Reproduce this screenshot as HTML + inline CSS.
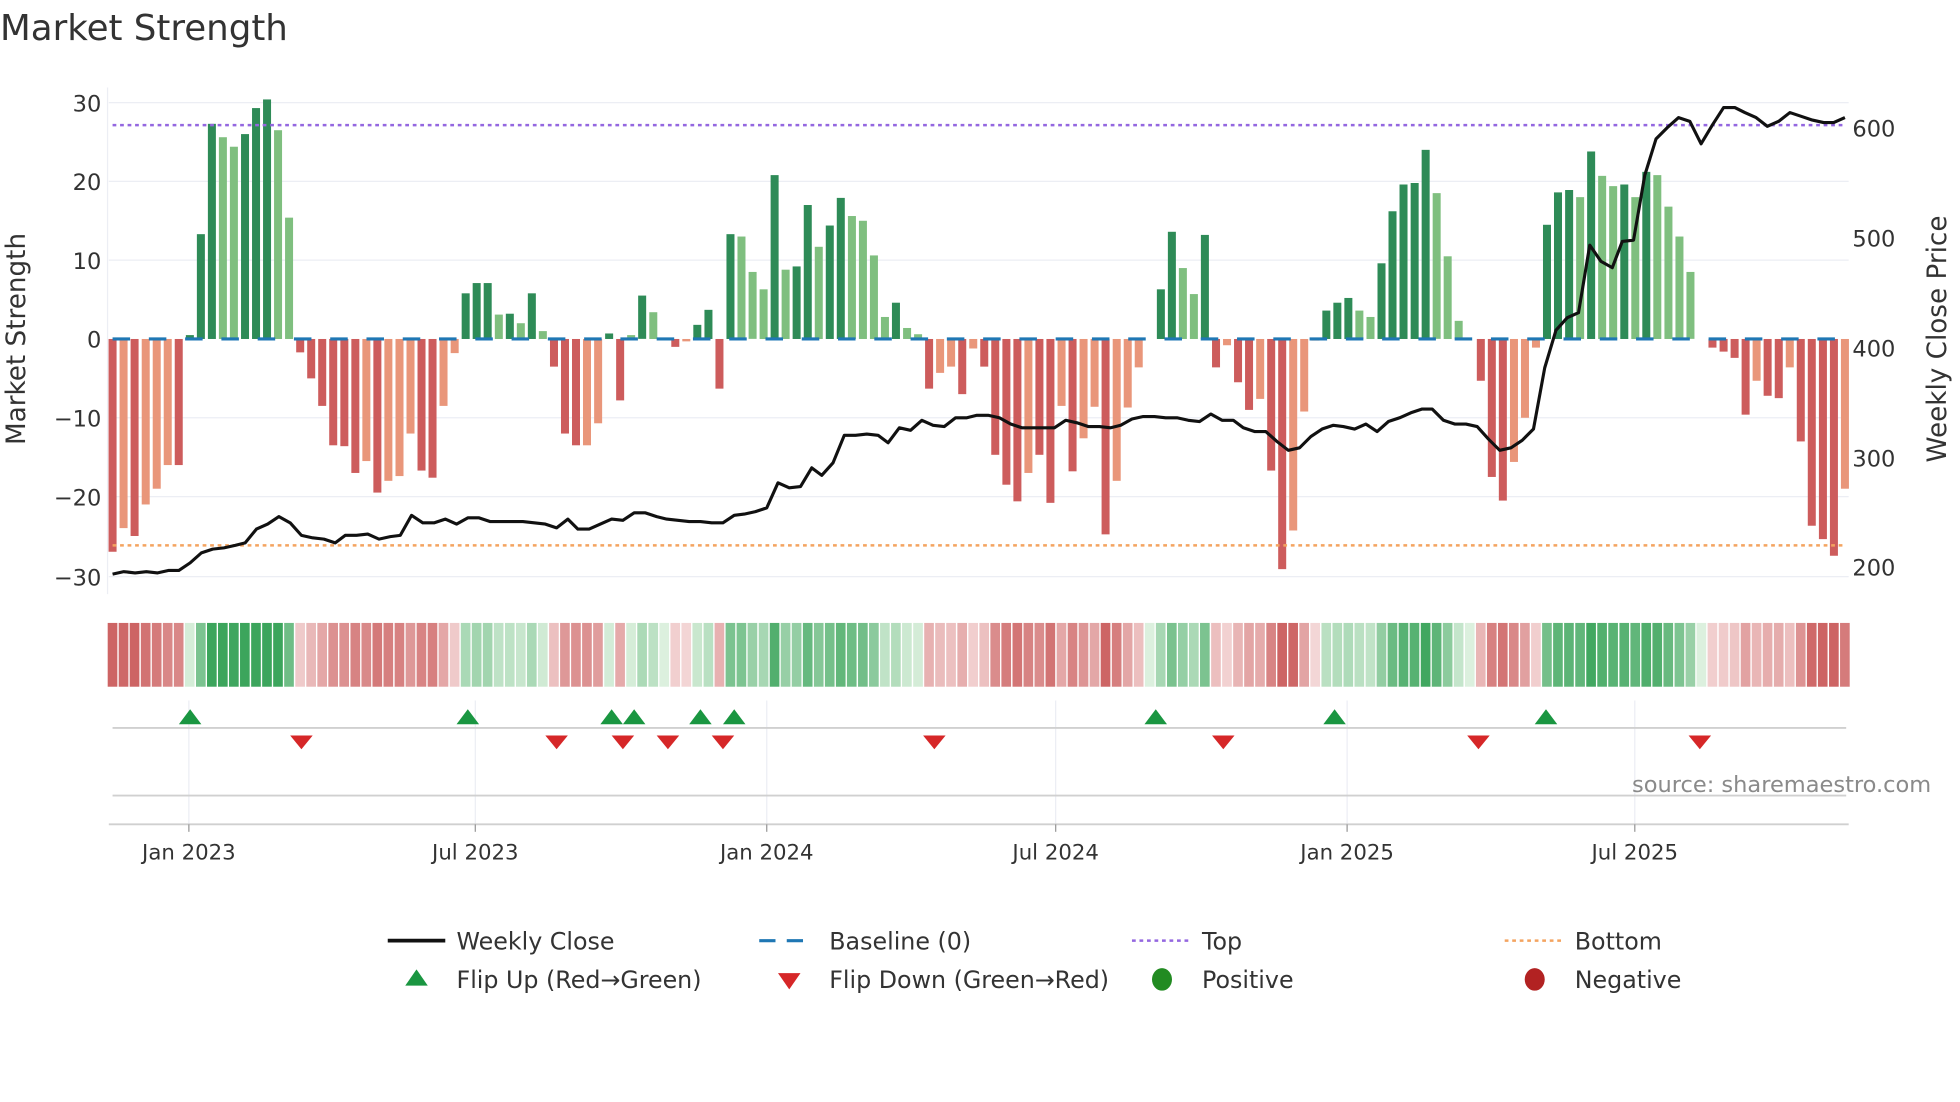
<!DOCTYPE html>
<html><head><meta charset="utf-8"><style>
html,body{margin:0;padding:0;background:#fff;width:1960px;height:1102px;overflow:hidden}
svg{display:block}
text{font-family:"DejaVu Sans","Liberation Sans",sans-serif;fill:#333}
</style></head><body>
<svg id="s" width="1960" height="1102" viewBox="0 0 1567 881" preserveAspectRatio="none" xmlns="http://www.w3.org/2000/svg">
<rect width="1567" height="881" fill="#fff"/>
<text x="0" y="32" font-size="28.5">Market Strength</text>
<g stroke="#eceef4" stroke-width="1">
<line x1="87" x2="1478" y1="82" y2="82"/><line x1="87" x2="1478" y1="145" y2="145"/>
<line x1="87" x2="1478" y1="208" y2="208"/><line x1="87" x2="1478" y1="334" y2="334"/>
<line x1="87" x2="1478" y1="397" y2="397"/><line x1="87" x2="1478" y1="461" y2="461"/>
<line x1="86" x2="86" y1="70" y2="475"/>
<line x1="151" x2="151" y1="560" y2="662"/><line x1="380" x2="380" y1="560" y2="662"/>
<line x1="613" x2="613" y1="560" y2="662"/><line x1="844" x2="844" y1="560" y2="662"/>
<line x1="1077" x2="1077" y1="560" y2="662"/><line x1="1307" x2="1307" y1="560" y2="662"/>
</g>
<g id="bars"></g>
<line x1="90" x2="1476" y1="271" y2="271" stroke="#1f77b4" stroke-width="2.5" stroke-dasharray="14,15"/>
<line x1="90" x2="1476" y1="100" y2="100" stroke="#9467e0" stroke-width="2" stroke-dasharray="3,3"/>
<line x1="90" x2="1476" y1="436" y2="436" stroke="#f4a460" stroke-width="2" stroke-dasharray="3,3"/>
<polyline id="close" fill="none" stroke="#111" stroke-width="2.5" stroke-linejoin="round"/>
<g font-size="18" text-anchor="end">
<text x="81" y="89">30</text><text x="81" y="152">20</text><text x="81" y="215">10</text>
<text x="81" y="278">0</text><text x="81" y="341">−10</text><text x="81" y="404">−20</text><text x="81" y="468">−30</text>
</g>
<g font-size="18">
<text x="1481" y="109">600</text><text x="1481" y="197">500</text><text x="1481" y="285">400</text>
<text x="1481" y="373">300</text><text x="1481" y="460">200</text>
</g>
<text font-size="21" text-anchor="middle" transform="translate(20,271) rotate(-90)">Market Strength</text>
<text font-size="21" text-anchor="middle" transform="translate(1556,271) rotate(-90)">Weekly Close Price</text>
<g id="strip"></g>
<line x1="90" x2="1476" y1="582" y2="582" stroke="#d0d0d0" stroke-width="1.5"/>
<line x1="90" x2="1476" y1="636" y2="636" stroke="#d0d0d0" stroke-width="1.5"/>
<line x1="87" x2="1478" y1="659" y2="659" stroke="#d0d0d0" stroke-width="1.5"/>
<g id="tri"></g>
<g stroke="#999" stroke-width="1">
<line x1="151" x2="151" y1="659" y2="665"/><line x1="380" x2="380" y1="659" y2="665"/>
<line x1="613" x2="613" y1="659" y2="665"/><line x1="844" x2="844" y1="659" y2="665"/>
<line x1="1077" x2="1077" y1="659" y2="665"/><line x1="1307" x2="1307" y1="659" y2="665"/>
</g>
<g font-size="17" text-anchor="middle">
<text x="151" y="687">Jan 2023</text><text x="380" y="687">Jul 2023</text><text x="613" y="687">Jan 2024</text>
<text x="844" y="687">Jul 2024</text><text x="1077" y="687">Jan 2025</text><text x="1307" y="687">Jul 2025</text>
</g>
<text x="1544" y="633" font-size="18" text-anchor="end" style="fill:#8a8a8a">source: sharemaestro.com</text>
<g font-size="19">
<line x1="310" x2="356" y1="752" y2="752" stroke="#111" stroke-width="3"/>
<text x="365" y="759">Weekly Close</text>
<line x1="607" x2="651" y1="752" y2="752" stroke="#1f77b4" stroke-width="2.5" stroke-dasharray="13,9"/>
<text x="663" y="759">Baseline (0)</text>
<line x1="905" x2="950" y1="752" y2="752" stroke="#9467e0" stroke-width="2" stroke-dasharray="3,3"/>
<text x="961" y="759">Top</text>
<line x1="1203" x2="1248" y1="752" y2="752" stroke="#f4a460" stroke-width="2" stroke-dasharray="3,3"/>
<text x="1259" y="759">Bottom</text>
<polygon points="324,788 342,788 333,775" fill="#1a9641"/>
<text x="365" y="790">Flip Up (Red→Green)</text>
<polygon points="622,778 640,778 631,791" fill="#d62728"/>
<text x="663" y="790">Flip Down (Green→Red)</text>
<ellipse cx="929" cy="783" rx="8" ry="9" fill="#228b22"/>
<text x="961" y="790">Positive</text>
<ellipse cx="1227" cy="783" rx="8" ry="9" fill="#b22222"/>
<text x="1259" y="790">Negative</text>
</g>
</svg>
<script>
(function(){
var NS="http://www.w3.org/2000/svg";
var d=[[-27,1],[-24,0],[-25,1],[-21,0],[-19,0],[-16,0],[-16,1],
[0.5,1],[13.3,1],[27.3,1],[25.6,0],[24.4,0],[26,1],[29.3,1],[30.4,1],[26.5,0],[15.4,0],
[-1.7,1],[-5,1],[-8.5,1],[-13.5,1],[-13.6,1],[-17,1],[-15.5,0],[-19.5,1],[-18,0],[-17.4,0],[-12,0],[-16.7,1],[-17.6,1],[-8.5,0],[-1.8,0],
[5.8,1],[7.1,1],[7.1,1],[3.1,0],[3.2,1],[2,0],[5.8,1],[1,0],[-3.5,1],[-12,1],[-13.5,1],[-13.5,0],[-10.7,0],[0.7,1],[-7.8,1],[0.5,0],[5.5,1],[3.4,0],[0,0],[-1,1],[-0.3,0],[1.8,1],[3.7,1],[-6.3,1],
[13.3,1],[13,0],[8.5,0],[6.3,0],[20.8,1],[8.8,0],[9.2,1],[17,1],[11.7,0],[14.4,1],[17.9,1],[15.6,0],[15,0],[10.6,0],[2.8,0],[4.6,1],[1.4,0],[0.6,0],
[-6.3,1],[-4.3,0],[-3.5,0],[-7,1],[-1.2,0],[-3.5,1],[-14.7,1],[-18.5,1],[-20.6,1],[-17,0],[-14.7,1],[-20.8,1],[-8.5,0],[-16.8,1],[-12.6,0],[-8.6,0],[-24.8,1],[-18,0],[-8.7,0],[-3.6,0],[0,0],
[6.3,1],[13.6,1],[9,0],[5.7,0],[13.2,1],
[-3.6,1],[-0.8,0],[-5.5,1],[-9,1],[-7.6,0],[-16.7,1],[-29.2,1],[-24.3,0],[-9.2,0],[-0.2,0],
[3.6,1],[4.6,1],[5.2,1],[3.6,0],[2.8,0],[9.6,1],[16.2,1],[19.6,1],[19.8,1],[24,1],[18.5,0],[10.5,0],[2.3,0],[0,0],
[-5.3,1],[-17.5,1],[-20.5,1],[-15.6,0],[-10,0],[-1.1,0],
[14.5,1],[18.6,1],[18.9,1],[18,0],[23.8,1],[20.7,0],[19.4,0],[19.6,1],[18,0],[21.2,1],[20.8,0],[16.8,0],[13,0],[8.5,0],[0,0],
[-1.1,1],[-1.6,1],[-2.4,1],[-9.6,1],[-5.3,0],[-7.2,1],[-7.5,1],[-3.6,0],[-13,1],[-23.7,1],[-25.4,1],[-27.5,1],[-19,0]];
var n=d.length,x0=90,x1=1475,sp=(x1-x0)/(n-1);
var g=document.getElementById('bars'),st=document.getElementById('strip');
function mix(a,b,t){return 'rgb('+[0,1,2].map(function(i){return Math.round(a[i]+(b[i]-a[i])*t)}).join(',')+')';}
for(var i=0;i<n;i++){
 var v=d[i][0],dk=d[i][1],x=x0+sp*i,w=6.4;
 if(Math.abs(v)>0.05){
  var r=document.createElementNS(NS,'rect');
  var y=v>0?271-v*6.3:271,h=Math.abs(v)*6.3;
  r.setAttribute('x',(x-w/2).toFixed(1));r.setAttribute('y',y.toFixed(1));
  r.setAttribute('width',w);r.setAttribute('height',h.toFixed(1));
  r.setAttribute('fill',v>0?(dk?'#2e8b57':'#7fbf7f'):(dk?'#cd5c5c':'#e9967a'));
  g.appendChild(r);
 }
 var t=Math.min(Math.abs(v)/25,1);
 var c=v>=0?mix([220,240,222],[60,165,92],Math.pow(t,0.8)):mix([244,216,216],[205,100,100],Math.pow(t,0.8));
 var s=document.createElementNS(NS,'rect');
 s.setAttribute('x',(x-sp/2+0.5).toFixed(1));s.setAttribute('y',498);
 s.setAttribute('width',(sp-1.1).toFixed(2));s.setAttribute('height',51);s.setAttribute('fill',c);
 st.appendChild(s);
}
var p=[[90,459],[99,457],[108,458],[117,457],[126,458],[135,456],[143,456],[152,450],[161,442],[170,439],[179,438],[188,436],[196,434],[205,423],[214,419],[223,413],[232,418],[241,428],[250,430],[259,431],[268,434],[276,428],[285,428],[294,427],[303,431],[312,429],[320,428],[329,412],[338,418],[347,418],[356,415],[365,419],[374,414],[383,414],[392,417],[401,417],[409,417],[418,417],[427,418],[436,419],[445,422],[454,415],[462,423],[471,423],[480,419],[489,415],[498,416],[507,410],[516,410],[525,413],[533,415],[542,416],[551,417],[560,417],[569,418],[578,418],[587,412],[595,411],[604,409],[613,406],[622,386],[631,390],[640,389],[649,374],[657,380],[666,370],[675,348],[684,348],[693,347],[702,348],[710,354],[719,342],[728,344],[737,336],[746,340],[755,341],[764,334],[773,334],[781,332],[790,332],[799,334],[808,339],[817,342],[826,342],[834,342],[843,342],[852,336],[861,338],[870,341],[879,341],[888,342],[896,340],[905,335],[914,333],[923,333],[932,334],[941,334],[950,336],[959,337],[968,331],[977,336],[986,336],[994,342],[1003,345],[1012,345],[1021,353],[1030,360],[1039,358],[1048,349],[1057,343],[1066,340],[1074,341],[1083,343],[1092,339],[1101,345],[1110,337],[1119,334],[1128,330],[1137,327],[1145,327],[1154,336],[1163,339],[1172,339],[1181,341],[1190,351],[1199,360],[1208,358],[1217,352],[1226,343],[1235,294],[1244,264],[1253,254],[1262,250],[1271,196],[1280,209],[1289,214],[1297,193],[1306,192],[1315,140],[1324,111],[1333,102],[1342,94],[1351,97],[1360,115],[1369,100],[1378,86],[1387,86],[1395,90],[1404,94],[1413,101],[1422,97],[1431,90],[1440,93],[1449,96],[1458,98],[1466,98],[1475,94]];
document.getElementById('close').setAttribute('points',p.map(function(a){return a.join(',')}).join(' '));
var tg=document.getElementById('tri');
[152,374,489,507,560,587,924,1067,1236].forEach(function(x){
 var q=document.createElementNS(NS,'polygon');
 q.setAttribute('points',(x-9)+',579 '+(x+9)+',579 '+x+',567');q.setAttribute('fill','#1a9641');tg.appendChild(q);});
[241,445,498,534,578,747,978,1182,1359].forEach(function(x){
 var q=document.createElementNS(NS,'polygon');
 q.setAttribute('points',(x-9)+',588 '+(x+9)+',588 '+x+',599');q.setAttribute('fill','#d62728');tg.appendChild(q);});
})();
</script>
</body></html>
